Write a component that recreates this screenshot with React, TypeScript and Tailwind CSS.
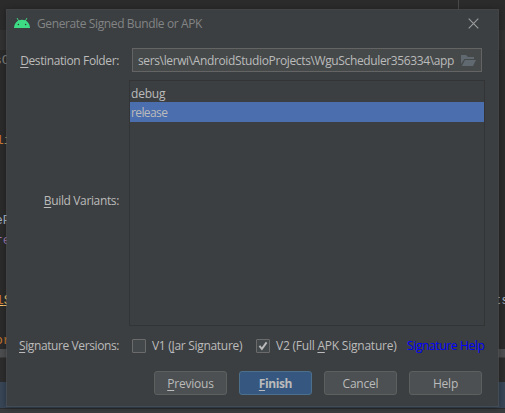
import type { ReactNode } from "react";

function Key({ children }: { children: ReactNode }) {
  return <span className="underline decoration-1 underline-offset-[2px] [text-decoration-skip-ink:none]">{children}</span>;
}

function CodeRow({ left, right, color }: { left?: ReactNode; right?: string; color?: string }) {
  return (
    <div className="flex h-5 shrink-0 items-center justify-between pt-[2px]">
      <span className={color}>{left}</span>
      <span className="-mr-[4px] text-[#a9b7c6]">{right}</span>
    </div>
  );
}

function Editor() {
  return (
    <div className="flex h-[413px] w-[505px] flex-col overflow-hidden bg-[#2b2b2b] font-['Liberation_Mono',monospace] text-[13px] leading-5">
      <div className="h-[30px] shrink-0 pl-[458px]">
        <div className="h-full w-px bg-[#4a4a4a]" />
      </div>
      <div className="h-5 shrink-0 bg-[#323232]" />
      <CodeRow left="sC" color="-ml-[6px] text-[#808080]" />
      <div className="h-[60px] shrink-0" />
      <CodeRow left={<>l<span className="text-[#b3a562]">i</span></>} color="-ml-[4px] text-[#cc7832]" />
      <div className="h-[60px] shrink-0" />
      <CodeRow left="eP" color="-ml-[5px] text-[#a9b7c6]" />
      <CodeRow left="re" color="-ml-[5px] text-[#9876aa]" />
      <div className="h-10 shrink-0" />
      <CodeRow left={<><span className="text-[#cc7832]">l</span>S</>} right="ts" color="-ml-[4px] text-[#ffc66d] underline" />
      <div className="h-5 shrink-0" />
      <CodeRow left="or" color="-ml-[5px] text-[#cc7832]" />
      <div className="-mt-px h-[8px] shrink-0 bg-[#4d4e4f]" />
      <div className="h-[25px] shrink-0 border-t border-[#3d3d3d] bg-[#2d2d2d]" />
      <div className="h-[26px] shrink-0 bg-[#384657]" />
      <div className="grow border-t border-[#2b2d2e] bg-[#3a3d3f]" />
    </div>
  );
}

function Android() {
  return (
    <svg className="mt-[8px] h-[10px] w-4" viewBox="0 0 16 10">
      <path d="M3.2.3 4.6 2.8M12.8.3 11.4 2.8" stroke="#3ddc84" strokeWidth=".9" strokeLinecap="round" />
      <path d="M0 10C.3 5 3.5 1.8 8 1.8S15.7 5 16 10Z" fill="#3ddc84" />
      <circle cx="4.4" cy="6.5" r=".75" fill="#303a35" />
      <circle cx="11.6" cy="6.5" r=".75" fill="#303a35" />
    </svg>
  );
}

function Folder() {
  return (
    <svg className="h-[11px] w-[15px]" viewBox="0 0 15 11">
      <path d="M0 9V0h5l2 2h6v2H3.5Z" fill="#606970" />
      <path d="M4 5h11l-3 6H.8Z" fill="#606970" />
    </svg>
  );
}

function Box({ checked }: { checked?: boolean }) {
  return (
    <span className="flex size-[14px] shrink-0 items-center justify-center rounded-[1px] border border-[#6b6b6b] bg-[#43494a]">
      {checked && (
        <svg className="size-3" viewBox="0 0 12 12" fill="none">
          <path d="m2.4 5.9 2.5 3L9.6 2.4" stroke="#bbbbbb" strokeWidth="1.9" />
        </svg>
      )}
    </span>
  );
}

function Button({ children, primary }: { children: ReactNode; primary?: boolean }) {
  return (
    <button
      className={`flex h-6 w-[73px] items-center justify-center rounded-[3px] border pt-[2px] ${
        primary ? "border-[#4c708c] bg-[#365880] font-bold tracking-[-0.4px]" : "border-[#5e6060] bg-[#4c5052] tracking-[-0.2px]"
      }`}
    >
      {children}
    </button>
  );
}

export default function App() {
  return (
    <div className="relative h-[413px] w-[505px] overflow-hidden">
      <Editor />
      <div className="absolute top-[9px] left-[6px] flex h-[398px] w-[493px] flex-col border border-[#55595b]/60 bg-[#3c3f41] bg-clip-padding font-['Open_Sans','Noto_Sans',sans-serif] text-[12px] leading-5 whitespace-nowrap text-[#bbbbbb] shadow-[0_1px_6px_rgba(0,0,0,0.35)]">
        <header className="flex h-[38px] shrink-0 pr-[19px] pl-[7px]">
          <Android />
          <span className="mt-1 ml-[7px] grow tracking-[-0.38px] text-[#828485]">Generate Signed Bundle or APK</span>
          <svg className="mt-2 h-[11px] w-[11px]" viewBox="0 0 11 11">
            <path d="m.7.7 9.6 9.6m0-9.6L.7 10.3" stroke="#9b9d9e" strokeWidth="1.1" />
          </svg>
        </header>
        <div className="flex h-6 shrink-0 items-center">
          <label className="w-[112px] pt-[2px] text-right tracking-[-0.38px]"><Key>D</Key>estination Folder:</label>
          <div className="ml-[13px] flex h-6 w-[350px] items-center border border-[#646464] bg-[#45494a] pl-[5px]">
            <span className="w-[323px] pt-[2px] tracking-[-0.37px]">sers\lerwi\AndroidStudioProjects\WguScheduler356334\app</span>
            <Folder />
          </div>
        </div>
        <div className="mt-2 flex h-[246px] shrink-0">
          <label className="mt-[111px] w-[112px] text-right tracking-[-0.36px]"><Key>B</Key>uild Variants:</label>
          <div className="ml-[10px] w-[356px] border border-[#323435] pt-px">
            <div className="h-5 pt-[2px] pl-px tracking-[-0.2px]">debug</div>
            <div className="h-5 bg-[#4b6eaf] pt-px pl-px tracking-[-0.6px]">release</div>
          </div>
        </div>
        <div className="mt-[10px] flex h-5 shrink-0 items-center">
          <span className="w-[112px] text-right tracking-[-0.4px]"><Key>S</Key>ignature Versions:</span>
          <label className="ml-[13px] flex w-[124px] items-center gap-[6px] tracking-[-0.3px]"><Box /><span>V1 (<Key>J</Key>ar Signature)</span></label>
          <label className="flex w-[151px] items-center gap-[6px] tracking-[-0.22px]"><Box checked /><span>V2 (Full <Key>A</Key>PK Signature)</span></label>
          <a className="tracking-[-0.36px] text-[#0000ff]">Signature Help</a>
        </div>
        <footer className="mt-[15px] ml-[147px] flex gap-3">
          <Button><Key>P</Key>revious</Button>
          <Button primary><Key>F</Key>inish</Button>
          <Button>Cancel</Button>
          <Button>Help</Button>
        </footer>
      </div>
    </div>
  );
}
